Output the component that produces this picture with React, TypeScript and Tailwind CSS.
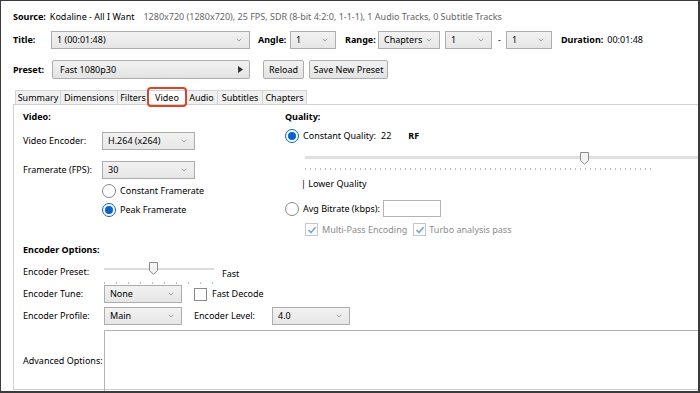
import { ChevronDown } from "lucide-react";

const Drop = ({ text, w }: { text: string; w: string }) => {
  return (
    <div
      className={`${w} flex h-[18px] items-center justify-between border border-[#adadad] bg-gradient-to-b from-[#f2f2f2] to-[#e6e6e6] pl-[5px] pr-[6px]`}
    >
      <span>{text}</span>
      <ChevronDown size={8} strokeWidth={1.5} className="text-[#555]" />
    </div>
  );
};

const Btn = ({ text, w }: { text: string; w: string }) => {
  return (
    <div
      className={`${w} flex h-[19px] items-center justify-center rounded-[2px] border border-[#adadad] bg-gradient-to-b from-[#f2f2f2] to-[#e3e3e3]`}
    >
      {text}
    </div>
  );
};

const Radio = ({ on }: { on?: boolean }) => {
  return (
    <div
      className={`flex h-[14px] w-[14px] shrink-0 items-center justify-center rounded-full border bg-white ${
        on ? "border-[#0a64c8]" : "border-[#8a8a8a]"
      }`}
    >
      {on && <div className="h-[8px] w-[8px] rounded-full bg-[#0a64c8]" />}
    </div>
  );
};

const Check = ({ on, dim }: { on?: boolean; dim?: boolean }) => {
  return (
    <div
      className={`flex h-[13px] w-[13px] shrink-0 items-center justify-center border bg-white ${
        dim ? "border-[#c6c6c6]" : "border-[#8a8a8a]"
      }`}
    >
      {on && (
        <svg width="10" height="10" viewBox="0 0 10 10">
          <path d="M1.5 5.2 L4 7.6 L8.6 2.2" fill="none" stroke="#7aa6d6" strokeWidth="1.6" />
        </svg>
      )}
    </div>
  );
};

const Thumb = () => {
  return (
    <svg width="9" height="13" viewBox="0 0 9 13">
      <path d="M0.5 0.5 H8.5 V8.5 L4.5 12.3 L0.5 8.5 Z" fill="#f4f4f4" stroke="#8c8c8c" strokeWidth="1" />
    </svg>
  );
};

const Ticks = ({ n, gap }: { n: number; gap: number }) => {
  return (
    <div className="flex">
      {Array.from({ length: n }).map((_, i) => (
        <div key={i} className="h-[2px] w-px bg-[#b9b9b9]" style={{ marginRight: gap }} />
      ))}
    </div>
  );
};

const Tab = ({ text, w, active }: { text: string; w: string; active?: boolean }) => {
  return (
    <div
      className={`${w} -mr-px flex h-[14px] items-center justify-center border border-b-0 border-[#d4d4d4] ${
        active ? "relative z-10 bg-white" : "bg-[#f0f0f0]"
      }`}
    >
      {text}
      {active && (
        <div className="absolute -bottom-[3px] -left-[2px] -right-[2px] -top-[4px] rounded-[4px] border-2 border-[#d9442c]" />
      )}
    </div>
  );
};

export default function App() {
  return (
    <div
      className="h-[393px] w-[700px] overflow-hidden border-b-2 border-l border-r-2 border-t border-[#3b3b3b] bg-white text-[9px] leading-[12px] text-black"
      style={{ fontFamily: '"Noto Sans", "Open Sans", sans-serif' }}
    >
      <div className="pl-[12px] pt-[10px]">
        <div className="flex items-center">
          <span className="font-bold">Source:</span>
          <span className="ml-[4px]">Kodaline - All I Want</span>
          <span className="ml-[9px] text-[#666]">
            1280x720 (1280x720), 25 FPS, SDR (8-bit 4:2:0, 1-1-1), 1 Audio Tracks, 0 Subtitle Tracks
          </span>
        </div>

        <div className="mt-[8px] flex items-center">
          <span className="w-[38px] font-bold">Title:</span>
          <Drop text="1  (00:01:48)" w="w-[199px]" />
          <span className="ml-[8px] w-[32px] font-bold">Angle:</span>
          <Drop text="1" w="w-[46px]" />
          <span className="ml-[9px] w-[33px] font-bold">Range:</span>
          <Drop text="Chapters" w="w-[62px]" />
          <div className="ml-[5px]">
            <Drop text="1" w="w-[47px]" />
          </div>
          <span className="ml-[6px] w-[8px]">-</span>
          <Drop text="1" w="w-[46px]" />
          <span className="ml-[9px] font-bold">Duration:</span>
          <span className="ml-[4px]">00:01:48</span>
        </div>

        <div className="mt-[11px] flex items-center">
          <span className="w-[39px] font-bold">Preset:</span>
          <div className="flex h-[19px] w-[198px] items-center justify-between rounded-[2px] border border-[#adadad] bg-gradient-to-b from-[#f2f2f2] to-[#e3e3e3] pl-[7px] pr-[6px]">
            <span>Fast 1080p30</span>
            <svg width="5" height="7" viewBox="0 0 5 7">
              <path d="M0 0 L5 3.5 L0 7 Z" fill="#333" />
            </svg>
          </div>
          <div className="ml-[13px]">
            <Btn text="Reload" w="w-[41px]" />
          </div>
          <div className="ml-[5px]">
            <Btn text="Save New Preset" w="w-[79px]" />
          </div>
        </div>

        <div className="mt-[11px] flex items-end pl-[2px]">
          <Tab text="Summary" w="w-[46px]" />
          <Tab text="Dimensions" w="w-[58px]" />
          <Tab text="Filters" w="w-[32px]" />
          <Tab text="Video" w="w-[38px]" active />
          <Tab text="Audio" w="w-[33px]" />
          <Tab text="Subtitles" w="w-[46px]" />
          <Tab text="Chapters" w="w-[45px]" />
        </div>

        <div className="h-[286px] border-b border-l border-t border-[#d0d0d0] pl-[9px]">
          <div className="flex">
            <div className="w-[262px]">
              <div className="mt-[6px] font-bold">Video:</div>
              <div className="mt-[9px] flex items-center">
                <span className="w-[79px]">Video Encoder:</span>
                <Drop text="H.264 (x264)" w="w-[93px]" />
              </div>
              <div className="mt-[11px] flex items-center">
                <span className="w-[79px]">Framerate (FPS):</span>
                <Drop text="30" w="w-[93px]" />
              </div>
              <div className="ml-[79px] mt-[5px] flex items-center gap-[4px]">
                <Radio />
                <span>Constant Framerate</span>
              </div>
              <div className="ml-[79px] mt-[5px] flex items-center gap-[4px]">
                <Radio on />
                <span>Peak Framerate</span>
              </div>
            </div>

            <div className="flex-1">
              <div className="mt-[6px] font-bold">Quality:</div>
              <div className="mt-[6px] flex items-center">
                <Radio on />
                <span className="ml-[4px]">Constant Quality:</span>
                <span className="ml-[5px]">22</span>
                <span className="ml-[17px] font-bold">RF</span>
              </div>
              <div className="relative ml-[20px] mt-[9px] h-[18px]">
                <div className="absolute left-0 right-0 top-[4px] h-[3px] border border-[#dadada] bg-[#e7e7e7]" />
                <div className="absolute left-[275px] top-0">
                  <Thumb />
                </div>
                <div className="absolute left-0 top-[16px]">
                  <Ticks n={70} gap={4} />
                </div>
              </div>
              <div className="ml-[16px] mt-[8px]">| Lower Quality</div>
              <div className="mt-[10px] flex items-center">
                <Radio />
                <span className="ml-[4px] w-[80px]">Avg Bitrate (kbps):</span>
                <div className="h-[17px] w-[58px] border border-[#b4b4b4] bg-white" />
              </div>
              <div className="ml-[20px] mt-[6px] flex items-center text-[#8c8c8c]">
                <Check on dim />
                <span className="ml-[4px]">Multi-Pass Encoding</span>
                <div className="ml-[6px]">
                  <Check on dim />
                </div>
                <span className="ml-[3px]">Turbo analysis pass</span>
              </div>
            </div>
          </div>

          <div className="mt-[8px] font-bold">Encoder Options:</div>
          <div className="mt-[6px] flex items-center">
            <span className="w-[81px]">Encoder Preset:</span>
            <div className="relative h-[20px] w-[110px]">
              <div className="absolute left-0 right-0 top-[6px] h-[2px] bg-[#dcdcdc]" />
              <div className="absolute left-[45px] top-0">
                <Thumb />
              </div>
              <div className="absolute left-0 top-[20px]">
                <Ticks n={10} gap={11} />
              </div>
            </div>
            <span className="ml-[8px] mt-[4px]">Fast</span>
          </div>
          <div className="mt-[3px] flex items-center">
            <span className="w-[81px]">Encoder Tune:</span>
            <Drop text="None" w="w-[78px]" />
            <div className="ml-[12px]">
              <Check />
            </div>
            <span className="ml-[5px]">Fast Decode</span>
          </div>
          <div className="mt-[4px] flex items-center">
            <span className="w-[81px]">Encoder Profile:</span>
            <Drop text="Main" w="w-[78px]" />
            <span className="ml-[12px] w-[78px]">Encoder Level:</span>
            <Drop text="4.0" w="w-[78px]" />
          </div>
          <div className="mt-[5px] flex items-center">
            <span className="w-[81px]">Advanced Options:</span>
            <div className="h-[62px] flex-1 border-l border-t border-[#b4b4b4]" />
          </div>
        </div>
      </div>
    </div>
  );
}
